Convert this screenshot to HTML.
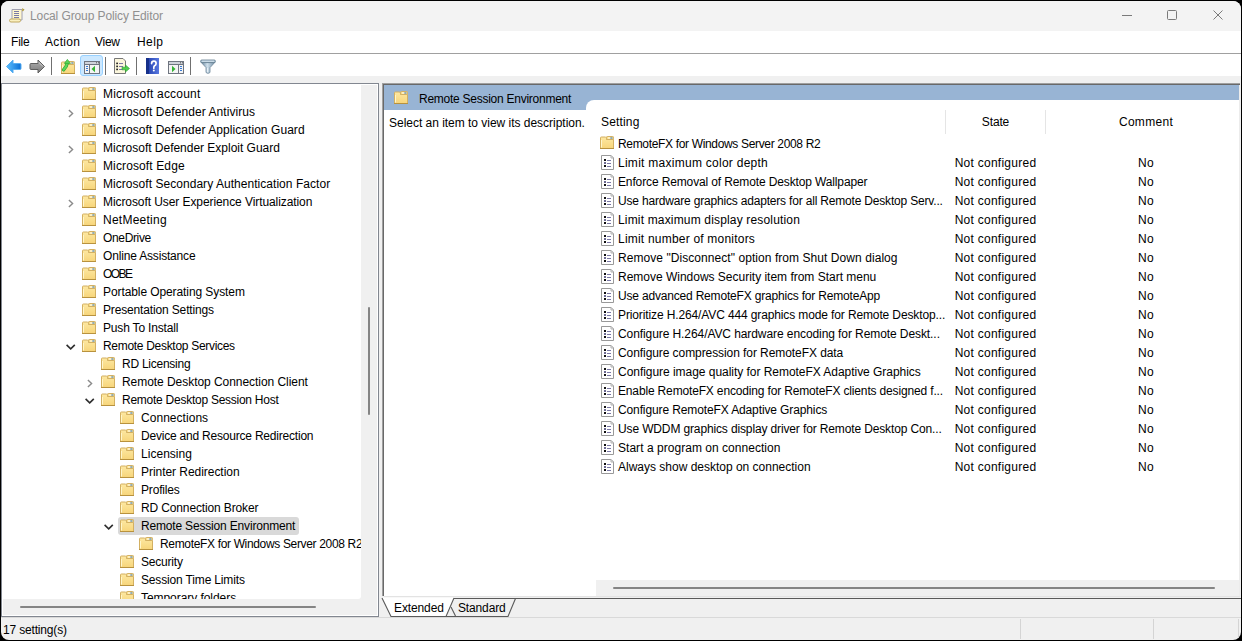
<!DOCTYPE html>
<html><head><meta charset="utf-8"><style>
html,body{margin:0;padding:0;width:1242px;height:641px;overflow:hidden;background:#000}
body{font-family:"Liberation Sans", sans-serif;position:relative}
#frame{position:absolute;left:1px;top:1px;width:1240px;height:639px;background:#f0f0f0;overflow:hidden;clip-path:inset(0 round 8px)}
</style></head><body>

<svg width="0" height="0" style="position:absolute">
<defs>
<linearGradient id="fg" x1="0" y1="0" x2="0" y2="1">
 <stop offset="0" stop-color="#fde8a2"/><stop offset="1" stop-color="#f7d57a"/>
</linearGradient>
<symbol id="fd" viewBox="0 0 14 13">
 <path d="M0.5 12.5 V1.8 Q0.5 1 1.3 1 H5.3 L6.5 2.2 V3.5 H13.5 V12.5 Z" fill="url(#fg)" stroke="#d3b062"/>
 <rect x="6.5" y="0.5" width="7" height="3" rx="0.8" fill="#f8dc86" stroke="#d3b062"/>
 <rect x="8" y="1.5" width="2.5" height="1" fill="#ffffff"/>
 <rect x="10.3" y="1.5" width="2.2" height="1" fill="#2f7fe6"/>
 <path d="M1.5 4 V11.5" stroke="#fff6cc" stroke-width="1"/>
 <path d="M0 12.5 H14" stroke="#b8923e" stroke-width="1"/>
</symbol>
<symbol id="pl" viewBox="0 0 13 15">
 <path d="M0.5 0.5 H10 L12.5 3 V14.5 H0.5 Z" fill="#fff" stroke="#999"/>
 <path d="M10 0.5 V3 H12.5 Z" fill="#fff" stroke="#b0b0b0"/>
 <rect x="3" y="4" width="2" height="2" fill="#111"/>
 <rect x="3" y="7" width="2" height="2" fill="#6a6890"/>
 <rect x="3" y="10" width="2" height="2" fill="#111"/>
 <rect x="6" y="5" width="4" height="1" fill="#7a78a6"/>
 <rect x="6" y="8" width="4" height="1" fill="#7a78a6"/>
 <rect x="6" y="11" width="4" height="1" fill="#7a78a6"/>
</symbol>
</defs>
</svg>

<div id="frame">
<div style="position:absolute;left:-1px;top:-1px;width:1242px;height:641px">
<div style="position:absolute;left:1px;top:1px;width:1240px;height:30px;background:#f3f3f3"></div>
<svg style="position:absolute;left:9px;top:8px" width="16" height="15" viewBox="0 0 16 15">
 <path d="M3 1.5 H13 V12 H3 Z" fill="#fff6cf" stroke="#a0a0b0"/>
 <path d="M13 0.8 L14.6 1.6 L13.4 3" fill="none" stroke="#b09a3a" stroke-width="1.2"/>
 <rect x="5" y="3" width="5" height="1" fill="#7a7aa6"/>
 <rect x="5" y="5" width="5" height="1" fill="#7a7aa6"/>
 <rect x="5" y="7" width="5" height="1" fill="#7a7aa6"/>
 <rect x="5" y="9" width="5" height="1" fill="#7a7aa6"/>
 <rect x="0.5" y="11" width="11" height="3" rx="1.5" fill="#faf0c0" stroke="#c0a860"/>
</svg>
<div style="position:absolute;left:30px;top:7px;font-size:12px;line-height:18px;color:#909090;white-space:nowrap;letter-spacing:-0.101px">Local Group Policy Editor</div>
<div style="position:absolute;left:1122px;top:15px;width:10px;height:1px;background:#7a7a7a"></div>
<div style="position:absolute;left:1167px;top:10px;width:8px;height:8px;border:1px solid #7a7a7a;border-radius:1.5px"></div>
<svg style="position:absolute;left:1213px;top:10px" width="10" height="10" viewBox="0 0 10 10"><path d="M0.5 0.5 L9.5 9.5 M9.5 0.5 L0.5 9.5" stroke="#7a7a7a" stroke-width="1"/></svg>
<div style="position:absolute;left:1px;top:31px;width:1240px;height:22px;background:#fff"></div>
<div style="position:absolute;left:11px;top:33px;font-size:12px;line-height:18px;color:#000;white-space:nowrap;letter-spacing:-0.201px">File</div>
<div style="position:absolute;left:45px;top:33px;font-size:12px;line-height:18px;color:#000;white-space:nowrap;letter-spacing:0.320px">Action</div>
<div style="position:absolute;left:95px;top:33px;font-size:12px;line-height:18px;color:#000;white-space:nowrap;letter-spacing:-0.267px">View</div>
<div style="position:absolute;left:137px;top:33px;font-size:12px;line-height:18px;color:#000;white-space:nowrap;letter-spacing:0.401px">Help</div>
<div style="position:absolute;left:1px;top:53px;width:1240px;height:1px;background:#a0a0a0"></div>
<div style="position:absolute;left:1px;top:54px;width:1240px;height:22px;background:#fff"></div>
<div style="position:absolute;left:1px;top:76px;width:1240px;height:7px;background:#f0f0f0"></div>
<div style="position:absolute;left:51px;top:57px;width:1px;height:18px;background:#707070"></div>
<div style="position:absolute;left:105px;top:57px;width:1px;height:18px;background:#707070"></div>
<div style="position:absolute;left:136px;top:57px;width:1px;height:18px;background:#707070"></div>
<div style="position:absolute;left:190px;top:57px;width:1px;height:18px;background:#707070"></div>
<div style="position:absolute;left:80px;top:55px;width:21px;height:19px;background:#cce8ff;border:1px solid #99d1ff;border-radius:3px"></div>
<svg style="position:absolute;left:6px;top:59px" width="16" height="15" viewBox="0 0 16 15">
<defs><linearGradient id="ab" x1="0" y1="0" x2="1" y2="0"><stop offset="0" stop-color="#5cc0ff"/><stop offset="1" stop-color="#0a6fd6"/></linearGradient></defs>
<path d="M0.5 7.5 L7 1 V4.5 H14 Q15 4.5 15 5.5 V9.5 Q15 10.5 14 10.5 H7 V14 Z" fill="url(#ab)" stroke="#59aef0" stroke-linejoin="round"/></svg>
<svg style="position:absolute;left:29px;top:59px" width="16" height="15" viewBox="0 0 16 15">
<defs><linearGradient id="ag" x1="0" y1="0" x2="0" y2="1"><stop offset="0" stop-color="#b0b0b0"/><stop offset="1" stop-color="#7a7a7a"/></linearGradient></defs>
<path d="M15.5 7.5 L9 1 V4.5 H2 Q1 4.5 1 5.5 V9.5 Q1 10.5 2 10.5 H9 V14 Z" fill="url(#ag)" stroke="#5f5f5f" stroke-linejoin="round"/><path d="M14 7.5 L9.8 3.3" stroke="#d8d8d8" stroke-width="0.8"/></svg>
<svg style="position:absolute;left:61px;top:61px" width="14" height="13"><use href="#fd"/></svg>
<svg style="position:absolute;left:61px;top:58px" width="14" height="16" viewBox="0 0 14 16">
<path d="M2.6 11.8 C4.5 10 5.8 8 6.2 5" fill="none" stroke="#2ea82e" stroke-width="3.4" stroke-linecap="round"/><path d="M2.6 11.8 C4.5 10 5.8 8 6.2 5" fill="none" stroke="#5cd65c" stroke-width="2" stroke-linecap="round"/>
<path d="M3.4 5.4 L6.4 1.4 L9.4 5.4 Z" fill="#5cd65c" stroke="#2ea82e" stroke-width="0.7" stroke-linejoin="round"/>
</svg>
<svg style="position:absolute;left:84px;top:61px" width="16" height="13" viewBox="0 0 16 13">
<rect x="0.5" y="0.5" width="15" height="12" fill="#f4f4f4" stroke="#6f7580"/>
<rect x="1" y="1" width="14" height="2" fill="#cfd3da"/>
<rect x="12" y="1.3" width="1" height="1" fill="#555"/><rect x="14" y="1.3" width="1" height="1" fill="#555"/>
<path d="M1 3.5 H15 M5.5 4 V12" stroke="#6f7580"/>
<rect x="2" y="5" width="2" height="1" fill="#3a7bd5"/><rect x="2" y="7" width="2" height="1" fill="#3a7bd5"/><rect x="2" y="9" width="2" height="1" fill="#3a7bd5"/>
<path d="M7.5 8 L11 4.8 V11.2 Z" fill="#36b336"/>
</svg>
<svg style="position:absolute;left:114px;top:58px" width="17" height="16" viewBox="0 0 17 16">
<path d="M0.5 0.5 H9 L11.5 3 V15.5 H0.5 Z" fill="#fbf6dc" stroke="#777"/>
<rect x="2.3" y="4.6" width="1.6" height="1.6" fill="#111"/><rect x="2.3" y="7.6" width="1.6" height="1.6" fill="#111"/><rect x="2.3" y="10.6" width="1.6" height="1.6" fill="#111"/>
<rect x="5" y="5" width="4" height="1" fill="#7a78a6"/><rect x="5" y="8" width="4" height="1" fill="#7a78a6"/><rect x="5" y="11" width="4" height="1" fill="#7a78a6"/>
<path d="M8 9.2 H11.5 V7 L15.5 10.5 L11.5 14 V11.8 H8 Z" fill="#4fcf4f" stroke="#2fa02f" stroke-width="0.6"/>
</svg>
<svg style="position:absolute;left:146px;top:58px" width="13" height="16" viewBox="0 0 13 16">
<defs><linearGradient id="hb" x1="0" y1="0" x2="1" y2="0"><stop offset="0" stop-color="#1d3aa8"/><stop offset="1" stop-color="#5878e0"/></linearGradient></defs>
<rect x="0" y="0" width="13" height="16" fill="url(#hb)"/>
<rect x="0" y="0" width="3" height="16" fill="#16308a"/>
<path d="M5.6 5.6 Q5.6 3.2 7.9 3.2 Q10.1 3.2 10.1 5.4 Q10.1 6.9 8.6 7.8 Q7.8 8.3 7.8 9.6 V10.2" fill="none" stroke="#fff" stroke-width="1.7" stroke-linecap="round"/><circle cx="7.8" cy="12.6" r="1" fill="#fff"/>
</svg>
<svg style="position:absolute;left:168px;top:61px" width="16" height="13" viewBox="0 0 16 13">
<rect x="0.5" y="0.5" width="15" height="12" fill="#f4f4f4" stroke="#6f7580"/>
<rect x="1" y="1" width="14" height="2" fill="#cfd3da"/>
<rect x="12" y="1.3" width="1" height="1" fill="#555"/><rect x="14" y="1.3" width="1" height="1" fill="#555"/>
<path d="M1 3.5 H15 M10.5 4 V12" stroke="#6f7580"/>
<rect x="12" y="5" width="2" height="1" fill="#3a7bd5"/><rect x="12" y="7" width="2" height="1" fill="#3a7bd5"/><rect x="12" y="9" width="2" height="1" fill="#3a7bd5"/>
<path d="M4 4.8 L7.5 8 L4 11.2 Z" fill="#36b336"/>
</svg>
<svg style="position:absolute;left:200px;top:59px" width="16" height="16" viewBox="0 0 16 16">
<defs><linearGradient id="fl" x1="0" y1="0" x2="1" y2="0"><stop offset="0" stop-color="#5f7f98"/><stop offset="0.45" stop-color="#cfe0ec"/><stop offset="1" stop-color="#6f8ca3"/></linearGradient></defs>
<path d="M1 3.2 L6 8.6 V13 Q6 14.3 8 14.3 Q10 14.3 10 13 V8.6 L15 3.2 Z" fill="url(#fl)" stroke="#6d8799" stroke-width="0.8"/>
<rect x="0.6" y="1" width="14.8" height="2.6" rx="1.2" fill="#a9c2d4" stroke="#5f7a8c" stroke-width="0.8"/>
<path d="M2 2.2 H14" stroke="#e6f0f6" stroke-width="0.8"/>
<path d="M7.6 9 V13" stroke="#eef4f8" stroke-width="0.9"/>
</svg>
<div style="position:absolute;left:1px;top:83px;width:374px;height:530px;border:1px solid #828790;box-shadow:inset 0 0 0 1px #fff;padding:1px;background:#f0f0f0"></div>
<div style="position:absolute;left:2px;top:84px;width:359px;height:515px;background:#fff;border-bottom-right-radius:3px;overflow:hidden">
<svg style="position:absolute;left:80px;top:3px" width="14" height="13"><use href="#fd"/></svg>
<div style="position:absolute;left:101px;top:1px;font-size:12px;line-height:18px;color:#000;white-space:nowrap;letter-spacing:0.202px">Microsoft account</div>
<svg style="position:absolute;left:80px;top:21px" width="14" height="13"><use href="#fd"/></svg>
<div style="position:absolute;left:101px;top:19px;font-size:12px;line-height:18px;color:#000;white-space:nowrap;letter-spacing:0.074px">Microsoft Defender Antivirus</div>
<svg style="position:absolute;left:66px;top:25px" width="6" height="9" viewBox="0 0 6 9"><path d="M0.9 0.9 L4.6 4.5 L0.9 8.1" fill="none" stroke="#8a8a8a" stroke-width="1.4"/></svg>
<svg style="position:absolute;left:80px;top:39px" width="14" height="13"><use href="#fd"/></svg>
<div style="position:absolute;left:101px;top:37px;font-size:12px;line-height:18px;color:#000;white-space:nowrap;letter-spacing:0.062px">Microsoft Defender Application Guard</div>
<svg style="position:absolute;left:80px;top:57px" width="14" height="13"><use href="#fd"/></svg>
<div style="position:absolute;left:101px;top:55px;font-size:12px;line-height:18px;color:#000;white-space:nowrap;letter-spacing:-0.018px">Microsoft Defender Exploit Guard</div>
<svg style="position:absolute;left:66px;top:61px" width="6" height="9" viewBox="0 0 6 9"><path d="M0.9 0.9 L4.6 4.5 L0.9 8.1" fill="none" stroke="#8a8a8a" stroke-width="1.4"/></svg>
<svg style="position:absolute;left:80px;top:75px" width="14" height="13"><use href="#fd"/></svg>
<div style="position:absolute;left:101px;top:73px;font-size:12px;line-height:18px;color:#000;white-space:nowrap;letter-spacing:0.122px">Microsoft Edge</div>
<svg style="position:absolute;left:80px;top:93px" width="14" height="13"><use href="#fd"/></svg>
<div style="position:absolute;left:101px;top:91px;font-size:12px;line-height:18px;color:#000;white-space:nowrap;letter-spacing:0.042px">Microsoft Secondary Authentication Factor</div>
<svg style="position:absolute;left:80px;top:111px" width="14" height="13"><use href="#fd"/></svg>
<div style="position:absolute;left:101px;top:109px;font-size:12px;line-height:18px;color:#000;white-space:nowrap;letter-spacing:-0.081px">Microsoft User Experience Virtualization</div>
<svg style="position:absolute;left:66px;top:115px" width="6" height="9" viewBox="0 0 6 9"><path d="M0.9 0.9 L4.6 4.5 L0.9 8.1" fill="none" stroke="#8a8a8a" stroke-width="1.4"/></svg>
<svg style="position:absolute;left:80px;top:129px" width="14" height="13"><use href="#fd"/></svg>
<div style="position:absolute;left:101px;top:127px;font-size:12px;line-height:18px;color:#000;white-space:nowrap;letter-spacing:0.246px">NetMeeting</div>
<svg style="position:absolute;left:80px;top:147px" width="14" height="13"><use href="#fd"/></svg>
<div style="position:absolute;left:101px;top:145px;font-size:12px;line-height:18px;color:#000;white-space:nowrap;letter-spacing:-0.344px">OneDrive</div>
<svg style="position:absolute;left:80px;top:165px" width="14" height="13"><use href="#fd"/></svg>
<div style="position:absolute;left:101px;top:163px;font-size:12px;line-height:18px;color:#000;white-space:nowrap;letter-spacing:-0.173px">Online Assistance</div>
<svg style="position:absolute;left:80px;top:183px" width="14" height="13"><use href="#fd"/></svg>
<div style="position:absolute;left:101px;top:181px;font-size:12px;line-height:18px;color:#000;white-space:nowrap;letter-spacing:-1.532px">OOBE</div>
<svg style="position:absolute;left:80px;top:201px" width="14" height="13"><use href="#fd"/></svg>
<div style="position:absolute;left:101px;top:199px;font-size:12px;line-height:18px;color:#000;white-space:nowrap;letter-spacing:-0.091px">Portable Operating System</div>
<svg style="position:absolute;left:80px;top:219px" width="14" height="13"><use href="#fd"/></svg>
<div style="position:absolute;left:101px;top:217px;font-size:12px;line-height:18px;color:#000;white-space:nowrap;letter-spacing:-0.150px">Presentation Settings</div>
<svg style="position:absolute;left:80px;top:237px" width="14" height="13"><use href="#fd"/></svg>
<div style="position:absolute;left:101px;top:235px;font-size:12px;line-height:18px;color:#000;white-space:nowrap;letter-spacing:-0.172px">Push To Install</div>
<svg style="position:absolute;left:80px;top:255px" width="14" height="13"><use href="#fd"/></svg>
<div style="position:absolute;left:101px;top:253px;font-size:12px;line-height:18px;color:#000;white-space:nowrap;letter-spacing:-0.302px">Remote Desktop Services</div>
<svg style="position:absolute;left:64px;top:260px" width="10" height="6" viewBox="0 0 10 6"><path d="M0.6 0.9 L4.7 4.9 L8.8 0.9" fill="none" stroke="#2e2e2e" stroke-width="1.6"/></svg>
<svg style="position:absolute;left:99px;top:273px" width="14" height="13"><use href="#fd"/></svg>
<div style="position:absolute;left:120px;top:271px;font-size:12px;line-height:18px;color:#000;white-space:nowrap;letter-spacing:-0.253px">RD Licensing</div>
<svg style="position:absolute;left:99px;top:291px" width="14" height="13"><use href="#fd"/></svg>
<div style="position:absolute;left:120px;top:289px;font-size:12px;line-height:18px;color:#000;white-space:nowrap;letter-spacing:-0.050px">Remote Desktop Connection Client</div>
<svg style="position:absolute;left:85px;top:295px" width="6" height="9" viewBox="0 0 6 9"><path d="M0.9 0.9 L4.6 4.5 L0.9 8.1" fill="none" stroke="#8a8a8a" stroke-width="1.4"/></svg>
<svg style="position:absolute;left:99px;top:309px" width="14" height="13"><use href="#fd"/></svg>
<div style="position:absolute;left:120px;top:307px;font-size:12px;line-height:18px;color:#000;white-space:nowrap;letter-spacing:-0.255px">Remote Desktop Session Host</div>
<svg style="position:absolute;left:83px;top:314px" width="10" height="6" viewBox="0 0 10 6"><path d="M0.6 0.9 L4.7 4.9 L8.8 0.9" fill="none" stroke="#2e2e2e" stroke-width="1.6"/></svg>
<svg style="position:absolute;left:118px;top:327px" width="14" height="13"><use href="#fd"/></svg>
<div style="position:absolute;left:139px;top:325px;font-size:12px;line-height:18px;color:#000;white-space:nowrap;letter-spacing:0.040px">Connections</div>
<svg style="position:absolute;left:118px;top:345px" width="14" height="13"><use href="#fd"/></svg>
<div style="position:absolute;left:139px;top:343px;font-size:12px;line-height:18px;color:#000;white-space:nowrap;letter-spacing:-0.208px">Device and Resource Redirection</div>
<svg style="position:absolute;left:118px;top:363px" width="14" height="13"><use href="#fd"/></svg>
<div style="position:absolute;left:139px;top:361px;font-size:12px;line-height:18px;color:#000;white-space:nowrap;letter-spacing:0.028px">Licensing</div>
<svg style="position:absolute;left:118px;top:381px" width="14" height="13"><use href="#fd"/></svg>
<div style="position:absolute;left:139px;top:379px;font-size:12px;line-height:18px;color:#000;white-space:nowrap;letter-spacing:-0.045px">Printer Redirection</div>
<svg style="position:absolute;left:118px;top:399px" width="14" height="13"><use href="#fd"/></svg>
<div style="position:absolute;left:139px;top:397px;font-size:12px;line-height:18px;color:#000;white-space:nowrap;letter-spacing:-0.173px">Profiles</div>
<svg style="position:absolute;left:118px;top:417px" width="14" height="13"><use href="#fd"/></svg>
<div style="position:absolute;left:139px;top:415px;font-size:12px;line-height:18px;color:#000;white-space:nowrap;letter-spacing:-0.138px">RD Connection Broker</div>
<div style="position:absolute;left:116px;top:433px;width:181px;height:18px;background:#d9d9d9;border-radius:3px"></div>
<svg style="position:absolute;left:118px;top:435px" width="14" height="13"><use href="#fd"/></svg>
<div style="position:absolute;left:139px;top:433px;font-size:12px;line-height:18px;color:#000;white-space:nowrap;letter-spacing:-0.176px">Remote Session Environment</div>
<svg style="position:absolute;left:102px;top:440px" width="10" height="6" viewBox="0 0 10 6"><path d="M0.6 0.9 L4.7 4.9 L8.8 0.9" fill="none" stroke="#2e2e2e" stroke-width="1.6"/></svg>
<svg style="position:absolute;left:137px;top:453px" width="14" height="13"><use href="#fd"/></svg>
<div style="position:absolute;left:158px;top:451px;font-size:12px;line-height:18px;color:#000;white-space:nowrap;letter-spacing:-0.338px">RemoteFX for Windows Server 2008 R2</div>
<svg style="position:absolute;left:118px;top:471px" width="14" height="13"><use href="#fd"/></svg>
<div style="position:absolute;left:139px;top:469px;font-size:12px;line-height:18px;color:#000;white-space:nowrap;letter-spacing:-0.202px">Security</div>
<svg style="position:absolute;left:118px;top:489px" width="14" height="13"><use href="#fd"/></svg>
<div style="position:absolute;left:139px;top:487px;font-size:12px;line-height:18px;color:#000;white-space:nowrap;letter-spacing:-0.156px">Session Time Limits</div>
<svg style="position:absolute;left:118px;top:507px" width="14" height="13"><use href="#fd"/></svg>
<div style="position:absolute;left:139px;top:505px;font-size:12px;line-height:18px;color:#000;white-space:nowrap;letter-spacing:-0.056px">Temporary folders</div>
</div>
<div style="position:absolute;left:368px;top:307px;width:2px;height:108px;background:#858585;border-radius:1px"></div>
<div style="position:absolute;left:20px;top:606px;width:296px;height:2px;background:#858585;border-radius:1px"></div>
<div style="position:absolute;left:382px;top:83px;width:858px;height:513px;background:#a0a0a0"></div>
<div style="position:absolute;left:383px;top:84px;width:857px;height:512px;background:#696969"></div>
<div style="position:absolute;left:384px;top:85px;width:855px;height:511px;background:#fff"></div>
<div style="position:absolute;left:1239px;top:85px;width:1px;height:511px;background:#ececec"></div>
<div style="position:absolute;left:384px;top:85px;width:855px;height:25px;background:#98b4d4"></div>
<svg style="position:absolute;left:394px;top:91px" width="14" height="13"><use href="#fd"/></svg>
<div style="position:absolute;left:419px;top:90px;font-size:12px;line-height:18px;color:#000;white-space:nowrap;letter-spacing:-0.256px">Remote Session Environment</div>
<div style="position:absolute;left:384px;top:110px;width:202px;height:486px;background:#fff"></div>
<div style="position:absolute;left:389px;top:114px;font-size:12px;line-height:18px;color:#000;white-space:nowrap;letter-spacing:-0.022px">Select an item to view its description.</div>
<div style="position:absolute;left:586px;top:100px;width:653px;height:496px;background:#fff;border-top-left-radius:8px"></div>
<div style="position:absolute;left:601px;top:113px;font-size:12px;line-height:18px;color:#000;white-space:nowrap;letter-spacing:0.167px">Setting</div>
<div style="position:absolute;left:945px;top:110px;width:1px;height:24px;background:#e5e5e5"></div>
<div style="position:absolute;left:1045px;top:110px;width:1px;height:24px;background:#e5e5e5"></div>
<div style="position:absolute;left:946px;top:113px;font-size:12px;line-height:18px;color:#000;white-space:nowrap;letter-spacing:-0.150px;width:99px;text-align:center">State</div>
<div style="position:absolute;left:1046px;top:113px;font-size:12px;line-height:18px;color:#000;white-space:nowrap;letter-spacing:0.302px;width:200px;text-align:center">Comment</div>
<svg style="position:absolute;left:600px;top:136px" width="14" height="13"><use href="#fd"/></svg>
<div style="position:absolute;left:618px;top:135px;font-size:12px;line-height:18px;color:#000;white-space:nowrap;letter-spacing:-0.335px">RemoteFX for Windows Server 2008 R2</div>
<svg style="position:absolute;left:601px;top:155px" width="13" height="15"><use href="#pl"/></svg>
<div style="position:absolute;left:618px;top:154px;font-size:12px;line-height:18px;color:#000;white-space:nowrap;letter-spacing:0.267px">Limit maximum color depth</div>
<div style="position:absolute;left:946px;top:154px;font-size:12px;line-height:18px;color:#000;white-space:nowrap;letter-spacing:0.263px;width:99px;text-align:center">Not configured</div>
<div style="position:absolute;left:1046px;top:154px;font-size:12px;line-height:18px;color:#000;white-space:nowrap;letter-spacing:0.400px;width:200px;text-align:center">No</div>
<svg style="position:absolute;left:601px;top:174px" width="13" height="15"><use href="#pl"/></svg>
<div style="position:absolute;left:618px;top:173px;font-size:12px;line-height:18px;color:#000;white-space:nowrap;letter-spacing:-0.130px">Enforce Removal of Remote Desktop Wallpaper</div>
<div style="position:absolute;left:946px;top:173px;font-size:12px;line-height:18px;color:#000;white-space:nowrap;letter-spacing:0.263px;width:99px;text-align:center">Not configured</div>
<div style="position:absolute;left:1046px;top:173px;font-size:12px;line-height:18px;color:#000;white-space:nowrap;letter-spacing:0.400px;width:200px;text-align:center">No</div>
<svg style="position:absolute;left:601px;top:193px" width="13" height="15"><use href="#pl"/></svg>
<div style="position:absolute;left:618px;top:192px;font-size:12px;line-height:18px;color:#000;white-space:nowrap;letter-spacing:-0.184px">Use hardware graphics adapters for all Remote Desktop Serv...</div>
<div style="position:absolute;left:946px;top:192px;font-size:12px;line-height:18px;color:#000;white-space:nowrap;letter-spacing:0.263px;width:99px;text-align:center">Not configured</div>
<div style="position:absolute;left:1046px;top:192px;font-size:12px;line-height:18px;color:#000;white-space:nowrap;letter-spacing:0.400px;width:200px;text-align:center">No</div>
<svg style="position:absolute;left:601px;top:212px" width="13" height="15"><use href="#pl"/></svg>
<div style="position:absolute;left:618px;top:211px;font-size:12px;line-height:18px;color:#000;white-space:nowrap;letter-spacing:0.166px">Limit maximum display resolution</div>
<div style="position:absolute;left:946px;top:211px;font-size:12px;line-height:18px;color:#000;white-space:nowrap;letter-spacing:0.263px;width:99px;text-align:center">Not configured</div>
<div style="position:absolute;left:1046px;top:211px;font-size:12px;line-height:18px;color:#000;white-space:nowrap;letter-spacing:0.400px;width:200px;text-align:center">No</div>
<svg style="position:absolute;left:601px;top:231px" width="13" height="15"><use href="#pl"/></svg>
<div style="position:absolute;left:618px;top:230px;font-size:12px;line-height:18px;color:#000;white-space:nowrap;letter-spacing:0.208px">Limit number of monitors</div>
<div style="position:absolute;left:946px;top:230px;font-size:12px;line-height:18px;color:#000;white-space:nowrap;letter-spacing:0.263px;width:99px;text-align:center">Not configured</div>
<div style="position:absolute;left:1046px;top:230px;font-size:12px;line-height:18px;color:#000;white-space:nowrap;letter-spacing:0.400px;width:200px;text-align:center">No</div>
<svg style="position:absolute;left:601px;top:250px" width="13" height="15"><use href="#pl"/></svg>
<div style="position:absolute;left:618px;top:249px;font-size:12px;line-height:18px;color:#000;white-space:nowrap;letter-spacing:0.061px">Remove "Disconnect" option from Shut Down dialog</div>
<div style="position:absolute;left:946px;top:249px;font-size:12px;line-height:18px;color:#000;white-space:nowrap;letter-spacing:0.263px;width:99px;text-align:center">Not configured</div>
<div style="position:absolute;left:1046px;top:249px;font-size:12px;line-height:18px;color:#000;white-space:nowrap;letter-spacing:0.400px;width:200px;text-align:center">No</div>
<svg style="position:absolute;left:601px;top:269px" width="13" height="15"><use href="#pl"/></svg>
<div style="position:absolute;left:618px;top:268px;font-size:12px;line-height:18px;color:#000;white-space:nowrap;letter-spacing:-0.011px">Remove Windows Security item from Start menu</div>
<div style="position:absolute;left:946px;top:268px;font-size:12px;line-height:18px;color:#000;white-space:nowrap;letter-spacing:0.263px;width:99px;text-align:center">Not configured</div>
<div style="position:absolute;left:1046px;top:268px;font-size:12px;line-height:18px;color:#000;white-space:nowrap;letter-spacing:0.400px;width:200px;text-align:center">No</div>
<svg style="position:absolute;left:601px;top:288px" width="13" height="15"><use href="#pl"/></svg>
<div style="position:absolute;left:618px;top:287px;font-size:12px;line-height:18px;color:#000;white-space:nowrap;letter-spacing:-0.186px">Use advanced RemoteFX graphics for RemoteApp</div>
<div style="position:absolute;left:946px;top:287px;font-size:12px;line-height:18px;color:#000;white-space:nowrap;letter-spacing:0.263px;width:99px;text-align:center">Not configured</div>
<div style="position:absolute;left:1046px;top:287px;font-size:12px;line-height:18px;color:#000;white-space:nowrap;letter-spacing:0.400px;width:200px;text-align:center">No</div>
<svg style="position:absolute;left:601px;top:307px" width="13" height="15"><use href="#pl"/></svg>
<div style="position:absolute;left:618px;top:306px;font-size:12px;line-height:18px;color:#000;white-space:nowrap;letter-spacing:-0.124px">Prioritize H.264/AVC 444 graphics mode for Remote Desktop...</div>
<div style="position:absolute;left:946px;top:306px;font-size:12px;line-height:18px;color:#000;white-space:nowrap;letter-spacing:0.263px;width:99px;text-align:center">Not configured</div>
<div style="position:absolute;left:1046px;top:306px;font-size:12px;line-height:18px;color:#000;white-space:nowrap;letter-spacing:0.400px;width:200px;text-align:center">No</div>
<svg style="position:absolute;left:601px;top:326px" width="13" height="15"><use href="#pl"/></svg>
<div style="position:absolute;left:618px;top:325px;font-size:12px;line-height:18px;color:#000;white-space:nowrap;letter-spacing:-0.083px">Configure H.264/AVC hardware encoding for Remote Deskt...</div>
<div style="position:absolute;left:946px;top:325px;font-size:12px;line-height:18px;color:#000;white-space:nowrap;letter-spacing:0.263px;width:99px;text-align:center">Not configured</div>
<div style="position:absolute;left:1046px;top:325px;font-size:12px;line-height:18px;color:#000;white-space:nowrap;letter-spacing:0.400px;width:200px;text-align:center">No</div>
<svg style="position:absolute;left:601px;top:345px" width="13" height="15"><use href="#pl"/></svg>
<div style="position:absolute;left:618px;top:344px;font-size:12px;line-height:18px;color:#000;white-space:nowrap;letter-spacing:-0.075px">Configure compression for RemoteFX data</div>
<div style="position:absolute;left:946px;top:344px;font-size:12px;line-height:18px;color:#000;white-space:nowrap;letter-spacing:0.263px;width:99px;text-align:center">Not configured</div>
<div style="position:absolute;left:1046px;top:344px;font-size:12px;line-height:18px;color:#000;white-space:nowrap;letter-spacing:0.400px;width:200px;text-align:center">No</div>
<svg style="position:absolute;left:601px;top:364px" width="13" height="15"><use href="#pl"/></svg>
<div style="position:absolute;left:618px;top:363px;font-size:12px;line-height:18px;color:#000;white-space:nowrap;letter-spacing:-0.038px">Configure image quality for RemoteFX Adaptive Graphics</div>
<div style="position:absolute;left:946px;top:363px;font-size:12px;line-height:18px;color:#000;white-space:nowrap;letter-spacing:0.263px;width:99px;text-align:center">Not configured</div>
<div style="position:absolute;left:1046px;top:363px;font-size:12px;line-height:18px;color:#000;white-space:nowrap;letter-spacing:0.400px;width:200px;text-align:center">No</div>
<svg style="position:absolute;left:601px;top:383px" width="13" height="15"><use href="#pl"/></svg>
<div style="position:absolute;left:618px;top:382px;font-size:12px;line-height:18px;color:#000;white-space:nowrap;letter-spacing:-0.157px">Enable RemoteFX encoding for RemoteFX clients designed f...</div>
<div style="position:absolute;left:946px;top:382px;font-size:12px;line-height:18px;color:#000;white-space:nowrap;letter-spacing:0.263px;width:99px;text-align:center">Not configured</div>
<div style="position:absolute;left:1046px;top:382px;font-size:12px;line-height:18px;color:#000;white-space:nowrap;letter-spacing:0.400px;width:200px;text-align:center">No</div>
<svg style="position:absolute;left:601px;top:402px" width="13" height="15"><use href="#pl"/></svg>
<div style="position:absolute;left:618px;top:401px;font-size:12px;line-height:18px;color:#000;white-space:nowrap;letter-spacing:-0.119px">Configure RemoteFX Adaptive Graphics</div>
<div style="position:absolute;left:946px;top:401px;font-size:12px;line-height:18px;color:#000;white-space:nowrap;letter-spacing:0.263px;width:99px;text-align:center">Not configured</div>
<div style="position:absolute;left:1046px;top:401px;font-size:12px;line-height:18px;color:#000;white-space:nowrap;letter-spacing:0.400px;width:200px;text-align:center">No</div>
<svg style="position:absolute;left:601px;top:421px" width="13" height="15"><use href="#pl"/></svg>
<div style="position:absolute;left:618px;top:420px;font-size:12px;line-height:18px;color:#000;white-space:nowrap;letter-spacing:-0.135px">Use WDDM graphics display driver for Remote Desktop Con...</div>
<div style="position:absolute;left:946px;top:420px;font-size:12px;line-height:18px;color:#000;white-space:nowrap;letter-spacing:0.263px;width:99px;text-align:center">Not configured</div>
<div style="position:absolute;left:1046px;top:420px;font-size:12px;line-height:18px;color:#000;white-space:nowrap;letter-spacing:0.400px;width:200px;text-align:center">No</div>
<svg style="position:absolute;left:601px;top:440px" width="13" height="15"><use href="#pl"/></svg>
<div style="position:absolute;left:618px;top:439px;font-size:12px;line-height:18px;color:#000;white-space:nowrap;letter-spacing:0.036px">Start a program on connection</div>
<div style="position:absolute;left:946px;top:439px;font-size:12px;line-height:18px;color:#000;white-space:nowrap;letter-spacing:0.263px;width:99px;text-align:center">Not configured</div>
<div style="position:absolute;left:1046px;top:439px;font-size:12px;line-height:18px;color:#000;white-space:nowrap;letter-spacing:0.400px;width:200px;text-align:center">No</div>
<svg style="position:absolute;left:601px;top:459px" width="13" height="15"><use href="#pl"/></svg>
<div style="position:absolute;left:618px;top:458px;font-size:12px;line-height:18px;color:#000;white-space:nowrap;letter-spacing:-0.005px">Always show desktop on connection</div>
<div style="position:absolute;left:946px;top:458px;font-size:12px;line-height:18px;color:#000;white-space:nowrap;letter-spacing:0.263px;width:99px;text-align:center">Not configured</div>
<div style="position:absolute;left:1046px;top:458px;font-size:12px;line-height:18px;color:#000;white-space:nowrap;letter-spacing:0.400px;width:200px;text-align:center">No</div>
<div style="position:absolute;left:596px;top:580px;width:643px;height:16px;background:#f0f0f0"></div>
<div style="position:absolute;left:613px;top:587px;width:602px;height:2px;background:#858585;border-radius:1px"></div>
<div style="position:absolute;left:384px;top:596px;width:856px;height:1px;background:#e3e3e3"></div>
<svg style="position:absolute;left:380px;top:596px" width="861" height="22" viewBox="0 0 861 22">
<path d="M135.5 2.5 H861" stroke="#5a5a5a" stroke-width="1.1"/>
<path d="M74 2.5 L135.5 2.5 L128 20.5 L66 20.5 L71 11 Z" fill="#f0f0f0"/>
<path d="M74 2.5 L135.5 2.5 L128 20.5 L66 20.5" fill="none" stroke="#5a5a5a" stroke-width="1.1"/>
<path d="M71 11 L75.5 20" fill="none" stroke="#5a5a5a" stroke-width="1.1"/>
<path d="M2 1.5 L74 1.5 L66 20.5 L11 20.5 Z" fill="#fff"/>
<path d="M2 2 L11 20.5 H66 L74 2" fill="none" stroke="#5a5a5a" stroke-width="1.1"/>
</svg>
<div style="position:absolute;left:394px;top:599px;font-size:12px;line-height:18px;color:#000;white-space:nowrap;letter-spacing:-0.115px">Extended</div>
<div style="position:absolute;left:458px;top:599px;font-size:12px;line-height:18px;color:#000;white-space:nowrap;letter-spacing:-0.142px">Standard</div>
<div style="position:absolute;left:1px;top:617px;width:1240px;height:1px;background:#d9d9d9"></div>
<div style="position:absolute;left:1020px;top:619px;width:1px;height:20px;background:#d4d4d4"></div>
<div style="position:absolute;left:1153px;top:619px;width:1px;height:20px;background:#d4d4d4"></div>
<div style="position:absolute;left:1238px;top:619px;width:1px;height:20px;background:#d4d4d4"></div>
<div style="position:absolute;left:3px;top:621px;font-size:12px;line-height:18px;color:#000;white-space:nowrap;letter-spacing:-0.167px">17 setting(s)</div>
</div></div>
</body></html>
